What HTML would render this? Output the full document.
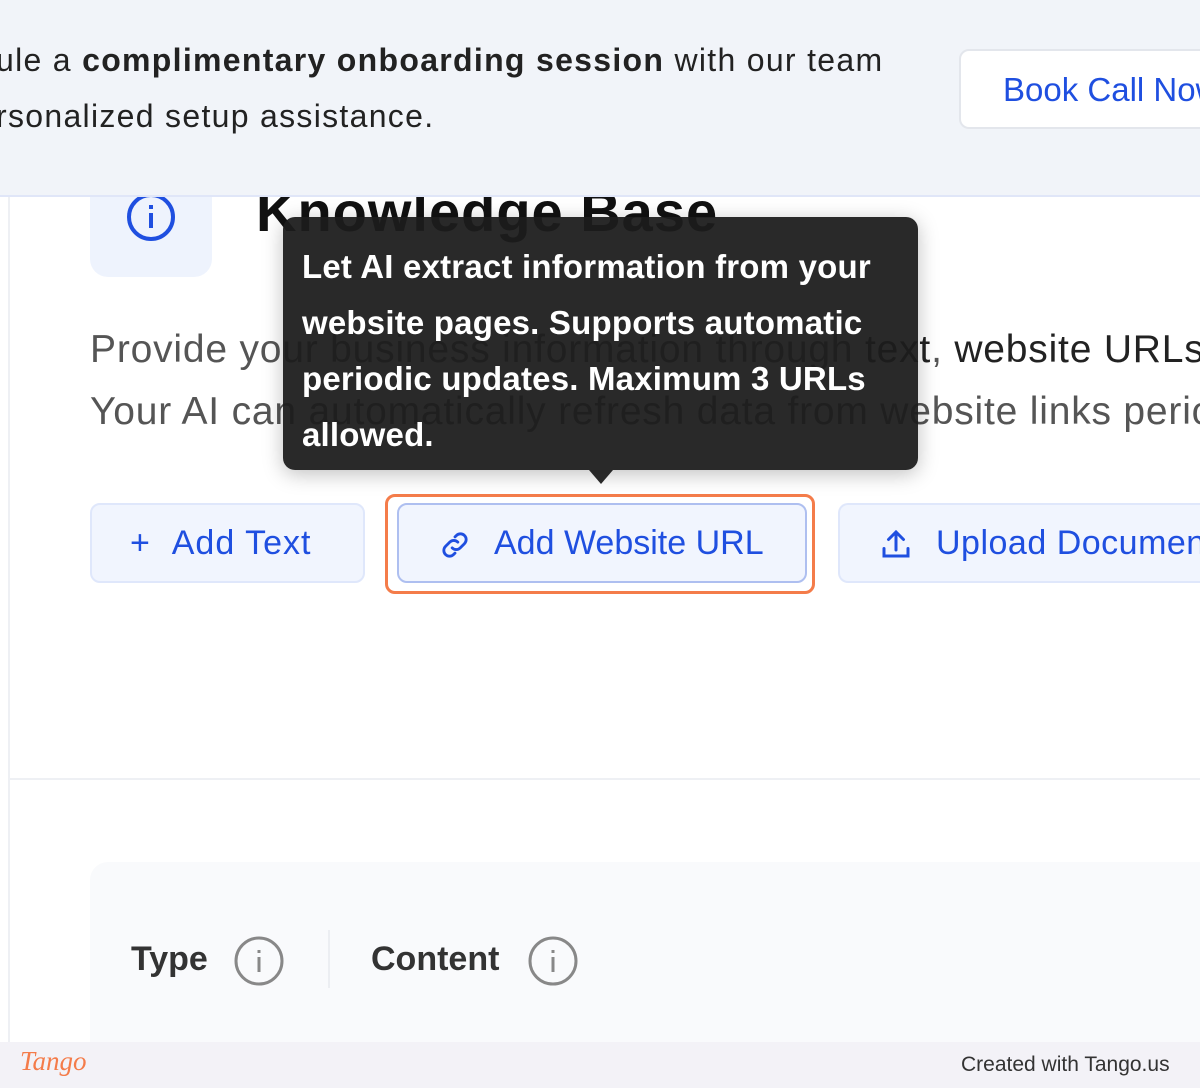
<!DOCTYPE html>
<html><head><meta charset="utf-8"><style>
*{margin:0;padding:0;box-sizing:border-box}
html,body{width:1200px;height:1088px;overflow:hidden;background:#fff}
body{font-family:"Liberation Sans",sans-serif}
#w{position:relative;width:1200px;height:1088px;overflow:hidden}
.abs{position:absolute;white-space:nowrap}
</style></head><body><div id="w">
<div class="abs" style="left:8px;top:196px;width:1192px;height:846px;border-left:2px solid #eef0f4;background:#fff"></div>
<div class="abs" style="left:90px;top:160px;width:122px;height:117px;background:#eef3fd;border-radius:18px"></div>
<svg class="abs" style="left:126px;top:192px" width="50" height="50" viewBox="0 0 50 50"><circle cx="25" cy="25" r="22" fill="none" stroke="#1f4fe0" stroke-width="4"/><rect x="23" y="21" width="4" height="15" fill="#1f4fe0"/><rect x="23" y="13" width="4" height="4" fill="#1f4fe0"/></svg>
<div class="abs" style="left:256px;top:179px;font-size:56px;font-weight:bold;color:#111;letter-spacing:1px">Knowledge Base</div>
<div class="abs" style="left:0;top:0;width:1200px;height:197px;background:#f1f4f9;border-bottom:2px solid #e0e6f8"></div>
<div class="abs" style="left:-4px;top:42px;font-size:32px;color:#222;letter-spacing:1.3px">ule a <b>complimentary onboarding session</b> with our team</div>
<div class="abs" style="left:-4px;top:98px;font-size:32px;color:#222;letter-spacing:1.3px">rsonalized setup assistance.</div>
<div class="abs" style="left:959px;top:49px;width:260px;height:80px;background:#fff;border:2px solid #e3e6ec;border-radius:10px;font-size:33px;color:#1f4fe0;padding:20px 0 0 42px">Book Call Now</div>
<div class="abs" style="left:90px;top:328px;font-size:39px;color:#555;letter-spacing:0.8px">Provide your business information through <span style="color:#222">text</span>, <span style="color:#222">website URLs</span></div>
<div class="abs" style="left:90px;top:390px;font-size:39px;color:#555;letter-spacing:0.8px">Your AI can automatically refresh data from website links periodically</div>
<div class="abs" style="left:90px;top:503px;width:275px;height:80px;background:#f1f5fe;border:2px solid #dfe7fb;border-radius:10px"></div>
<div class="abs" style="left:130px;top:524px;font-size:34px;color:#1f4fe0;letter-spacing:1px">+ &nbsp;Add Text</div>
<div class="abs" style="left:385px;top:494px;width:430px;height:100px;border:3px solid #f47c4a;border-radius:10px"></div>
<div class="abs" style="left:397px;top:503px;width:410px;height:80px;background:#f1f5fe;border:2px solid #aebff0;border-radius:10px"></div>
<svg class="abs" style="left:438px;top:528px" width="34" height="34" viewBox="0 0 24 24" fill="none" stroke="#1f4fe0" stroke-width="2" stroke-linecap="round"><path d="M10 14a4 4 0 0 0 5.7 0l3-3a4 4 0 0 0-5.7-5.7l-1 1"/><path d="M14 10a4 4 0 0 0-5.7 0l-3 3a4 4 0 0 0 5.7 5.7l1-1"/></svg>
<div class="abs" style="left:494px;top:524px;font-size:34px;color:#1f4fe0">Add Website URL</div>
<div class="abs" style="left:838px;top:503px;width:362px;height:80px;background:#f1f5fe;border:2px solid #dfe7fb;border-right:none;border-radius:10px 0 0 10px"></div>
<svg class="abs" style="left:878px;top:526px" width="36" height="36" viewBox="0 0 24 24" fill="none" stroke="#1f4fe0" stroke-width="2" stroke-linecap="round"><path d="M12 16V4M7 9l5-5 5 5M4 15v5h16v-5"/></svg>
<div class="abs" style="left:936px;top:524px;font-size:34px;color:#1f4fe0;letter-spacing:0.5px">Upload Documents</div>
<div class="abs" style="left:283px;top:217px;width:635px;height:253px;background:rgba(28,28,28,0.94);border-radius:12px;box-shadow:0 4px 20px rgba(0,0,0,.25);padding:22px 0 0 19px;color:#fff;font-size:33px;line-height:56px;white-space:normal;letter-spacing:0.2px;font-weight:bold">Let AI extract information from your<br>website pages. Supports automatic<br>periodic updates. Maximum 3 URLs<br>allowed.</div>
<div class="abs" style="left:589px;top:470px;width:0;height:0;border-left:12px solid transparent;border-right:12px solid transparent;border-top:14px solid rgba(28,28,28,0.94)"></div>
<div class="abs" style="left:10px;top:778px;width:1190px;height:2px;background:#eef0f4"></div>
<div class="abs" style="left:90px;top:862px;width:1110px;height:180px;background:#f9fafc;border-radius:18px 0 0 0"></div>
<div class="abs" style="left:131px;top:940px;font-size:34px;font-weight:bold;color:#333">Type</div>
<svg class="abs" style="left:233px;top:935px" width="52" height="52" viewBox="0 0 52 52"><circle cx="26" cy="26" r="23" fill="none" stroke="#888" stroke-width="3"/><rect x="24.5" y="22" width="3" height="15" fill="#888"/><rect x="24.5" y="15" width="3" height="3" fill="#888"/></svg>
<div class="abs" style="left:328px;top:930px;width:2px;height:58px;background:#eceef2"></div>
<div class="abs" style="left:371px;top:940px;font-size:34px;font-weight:bold;color:#333">Content</div>
<svg class="abs" style="left:527px;top:935px" width="52" height="52" viewBox="0 0 52 52"><circle cx="26" cy="26" r="23" fill="none" stroke="#888" stroke-width="3"/><rect x="24.5" y="22" width="3" height="15" fill="#888"/><rect x="24.5" y="15" width="3" height="3" fill="#888"/></svg>
<div class="abs" style="left:0;top:1042px;width:1200px;height:46px;background:#f3f2f7"></div>
<div class="abs" style="left:20px;top:1046px;font-size:27px;font-style:italic;color:#f47c4a;font-family:'Liberation Serif',serif">Tango</div>
<div class="abs" style="left:961px;top:1053px;font-size:21px;color:#333">Created with Tango.us</div>
</div></body></html>
